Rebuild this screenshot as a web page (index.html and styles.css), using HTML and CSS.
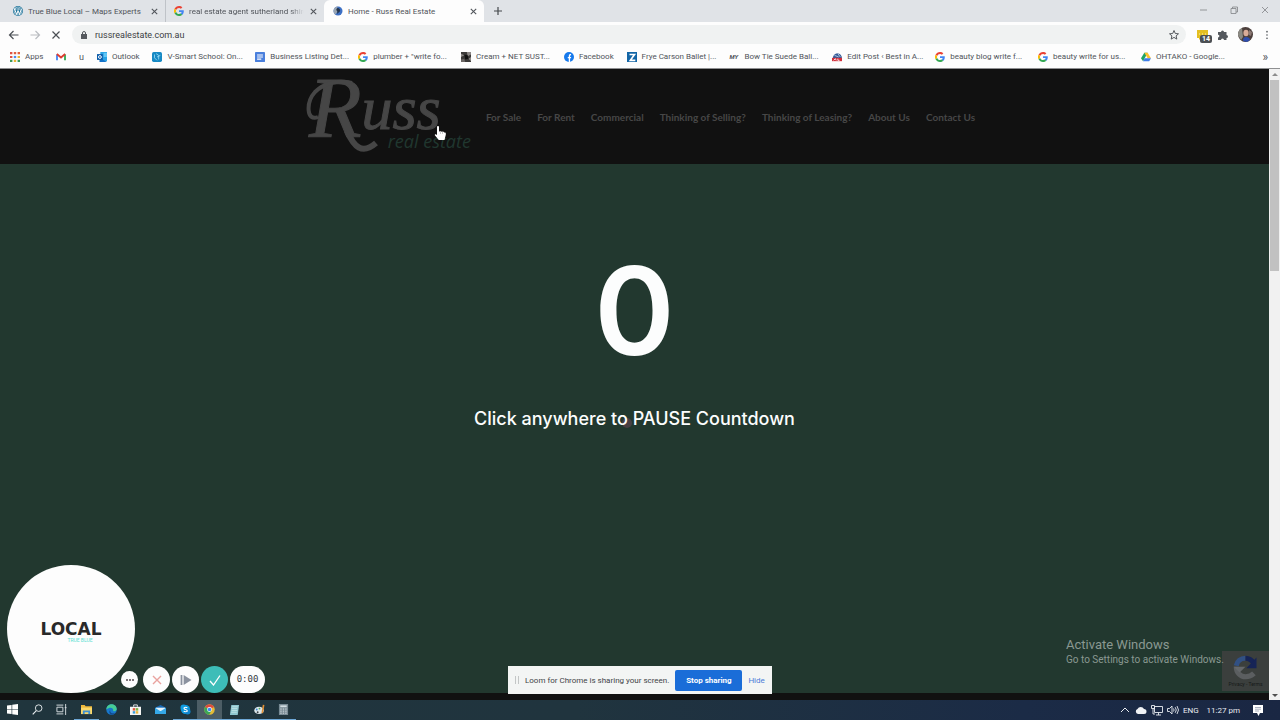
FILE: index.html
```html
<!DOCTYPE html>
<html lang="en">
<head>
  <meta charset="UTF-8">
  <meta name="viewport" content="width=device-width, initial-scale=1.0">
  <title>Home - Russ Real Estate</title>
  <link rel="stylesheet" href="styles.css">
</head>
<body>
  <!-- shared icons -->
  <svg class="defs" width="0" height="0" aria-hidden="true">
    <symbol id="google" viewBox="0 0 48 48">
      <path fill="#ea4335" d="M24 9.500c3.500 0 6.700 1.200 9.200 3.600l6.900-6.900C35.900 2.400 30.500 0 24 0 14.600 0 6.500 5.400 2.600 13.200l8 6.200C12.400 13.700 17.700 9.500 24 9.500z"/>
      <path fill="#4285f4" d="M47 24.600c0-1.600-.2-3.100-.4-4.600H24v9h12.900c-.6 3-2.200 5.500-4.700 7.200l7.700 6C44.400 38 47 31.800 47 24.600z"/>
      <path fill="#fbbc05" d="M10.500 28.600a14.500 14.500 0 0 1 0-9.200l-8-6.200a24 24 0 0 0 0 21.600z"/>
      <path fill="#34a853" d="M24 48c6.500 0 11.900-2.100 15.900-5.800l-7.700-6c-2.200 1.500-4.900 2.300-8.200 2.300-6.300 0-11.600-4.200-13.500-9.900l-8 6.200C6.500 42.600 14.600 48 24 48z"/>
    </symbol>
    <symbol id="close" viewBox="0 0 10 10">
      <path d="M2 2l6 6M8 2l-6 6" fill="none" stroke="currentColor" stroke-width="1.200"/>
    </symbol>
  </svg>

  <header class="browser">
    <div class="tabs">
      <div class="tab">
        <svg class="icon" viewBox="0 0 20 20"><circle cx="10" cy="10" r="10" fill="#21759b"/><circle cx="10" cy="10" r="8" fill="none" stroke="#fff" stroke-width="1"/><path d="M3 6l4.500 11L10 9l3 8 3.500-11M2 6h5M8.500 6h5" fill="none" stroke="#fff" stroke-width="2"/></svg>
        <a class="tab-title" href="#">True Blue Local – Maps Experts</a>
        <button class="tab-close" aria-label="Close tab"><svg><use href="#close"/></svg></button>
      </div>
      <div class="tab tab-second">
        <svg class="icon"><use href="#google"/></svg>
        <a class="tab-title fade" href="#">real estate agent sutherland shire</a>
        <button class="tab-close" aria-label="Close tab"><svg><use href="#close"/></svg></button>
      </div>
      <div class="tab active">
        <svg class="icon" viewBox="0 0 20 20"><circle cx="10" cy="10" r="9" fill="#3c6fc4"/><path d="M10 1a9 9 0 0 0-4 17c-1-4 3-5 3-8s-3-3 1-9z" fill="#9aa5b1"/><path d="M9 4c4 0 6 3 5 6s-4 3-5 6c-2-2 1-4-1-6s-2-4 1-6z" fill="#26364d"/></svg>
        <a class="tab-title" href="#">Home - Russ Real Estate</a>
        <button class="tab-close" aria-label="Close tab"><svg><use href="#close"/></svg></button>
      </div>
      <button class="new-tab" aria-label="New tab"><svg viewBox="0 0 10 10"><path d="M5 1v8M1 5h8" stroke="#45494d" stroke-width="1.200"/></svg></button>
      <div class="window-buttons">
        <button aria-label="Minimize"><svg viewBox="0 0 10 10"><path d="M2 5h7"/></svg></button>
        <button aria-label="Restore"><svg viewBox="0 0 10 10"><path d="M2 3.500h5v5H2zM3.500 3.500V2h5v5H7"/></svg></button>
        <button aria-label="Close"><svg viewBox="0 0 10 10"><path d="M2 2l6 6M8 2l-6 6"/></svg></button>
      </div>
    </div>

    <div class="toolbar">
      <div class="nav-buttons">
        <button aria-label="Back"><svg viewBox="0 0 12 12"><path d="M10.500 6h-9M5.500 2l-4 4 4 4" stroke="#4b4f54"/></svg></button>
        <button aria-label="Forward"><svg viewBox="0 0 12 12"><path d="M1.500 6h9M6.500 2l4 4-4 4" stroke="#b9bcc0"/></svg></button>
        <button aria-label="Stop loading"><svg viewBox="0 0 12 12"><path d="M2.500 2.500l7 7M9.500 2.500l-7 7" stroke="#4b4f54"/></svg></button>
      </div>
      <div class="omnibox">
        <svg class="lock" viewBox="0 0 8 10"><path d="M1 4h6v5H1z" fill="#55595e"/><path d="M2.500 4.500V3a1.500 1.500 0 0 1 3 0v1.500" fill="none" stroke="#55595e"/></svg>
        <input type="text" value="russrealestate.com.au" aria-label="Address">
        <button class="star" aria-label="Bookmark this page"><svg viewBox="0 0 12 12"><path d="M6 1.500l1.300 3 3.200.3-2.400 2.100.7 3.200L6 8.400l-2.800 1.700.7-3.200-2.400-2.100 3.200-.3z" fill="none" stroke="#55595e"/></svg></button>
      </div>
      <div class="extensions">
        <button class="ext-badge" aria-label="Extension">
          <svg viewBox="0 0 12 12"><path d="M1 1h11v8H5l-2 2V9H1z" fill="#e4bf22"/><path d="M3 5h1M6 5h1M9 5h1" stroke="#fff3b5"/></svg>
          <span>14</span>
        </button>
        <button aria-label="Extensions"><svg viewBox="0 0 12 12"><path d="M1 3h3a1.500 1.500 0 0 1 3 0h2.500v3a1.400 1.400 0 0 1 0 3v2H7a1.400 1.400 0 0 0-3 0H1V8.500a1.400 1.400 0 0 0 0-2.800z" fill="#55595e"/></svg></button>
        <button class="avatar" aria-label="Profile"><svg viewBox="0 0 15 15"><circle cx="7.500" cy="7.500" r="7.500" fill="#4b3e3b"/><path d="M0 8a7.500 7.500 0 0 1 4-7l1 9-2 3z" fill="#8b8a83"/><ellipse cx="8" cy="6" rx="2.600" ry="3.300" fill="#d9ac98"/><path d="M5 14c0-3 1-4 3-4s4 1 4 3l-3 2z" fill="#2d4dae"/><path d="M11 3l3 2-1 4-2-1z" fill="#8d7a75"/></svg></button>
        <button aria-label="Menu"><svg viewBox="0 0 12 12"><g fill="#55595e"><circle cx="6" cy="2" r="1"/><circle cx="6" cy="6" r="1"/><circle cx="6" cy="10" r="1"/></g></svg></button>
      </div>
    </div>

    <nav class="bookmarks">
      <ul>
        <li><a href="#"><svg class="icon" viewBox="0 0 10 10"><path d="M0 1.200h2.400M0 5h2.400" stroke="#dd5144" stroke-width="2.200"/><path d="M3.800 1.200h2.400M7.600 1.200H10" stroke="#e0603f" stroke-width="2.200"/><path d="M3.800 5h2.400" stroke="#4b8bf0" stroke-width="2.200"/><path d="M7.600 5H10M3.800 8.800h2.400" stroke="#e8b532" stroke-width="2.200"/><path d="M0 8.800h2.400M7.600 8.800H10" stroke="#3c9a5b" stroke-width="2.200"/></svg><span>Apps</span></a></li>
        <li><a href="#" aria-label="Gmail"><svg class="icon" viewBox="0 0 12 10"><path d="M1.200 9V2" stroke="#4285f4" stroke-width="2.200"/><path d="M10.800 9V2" stroke="#34a853" stroke-width="2.200"/><path d="M1 1.500l5 4 5-4" fill="none" stroke="#dd3c30" stroke-width="2.300"/></svg></a></li>
        <li><a href="#" class="letter">u</a></li>
        <li><a href="#"><svg class="icon" viewBox="0 0 12 12"><path d="M4 0h8v11H4z" fill="#2aa4e6"/><path d="M8 1h4v5H8z" fill="#62c6f5"/><path d="M3 7l9 5H3z" fill="#1372c8"/><path d="M0 2.500h7v7H0z" fill="#0b5cab"/><circle cx="3.500" cy="6" r="1.700" fill="none" stroke="#fff" stroke-width="1.200"/></svg><span>Outlook</span></a></li>
        <li><a href="#"><svg class="icon" viewBox="0 0 12 12"><rect width="12" height="12" rx="2" fill="#1689c4"/><path d="M3 3v4l3 3M6 6l4-2M5 2l3 2v5" fill="none" stroke="#9bdcf5"/></svg><span class="long">V-Smart School: On...</span></a></li>
        <li><a href="#"><svg class="icon" viewBox="0 0 12 12"><rect width="12" height="12" rx="1" fill="#4a7fdc"/><path d="M2.500 3.500h7M2.500 6h7M2.500 8.500h5" stroke="#fff" stroke-width="1.300"/></svg><span class="long">Business Listing Det...</span></a></li>
        <li><a href="#"><svg class="icon"><use href="#google"/></svg><span class="long">plumber + "write fo...</span></a></li>
        <li><a href="#"><svg class="icon" viewBox="0 0 12 12"><path d="M0 0h12v12H0z" fill="#3b3938"/><path d="M0 2l4 2-4 2zM7 0h5v3L8 5zM12 6v5L9 8z" fill="#8d8886"/><path d="M0 9l4-1 1 4H0z" fill="#6a6664"/><path d="M4 3l4 1 1 4-4 1z" fill="#111"/></svg><span class="long">Cream + NET SUST...</span></a></li>
        <li><a href="#"><svg class="icon" viewBox="0 0 12 12"><circle cx="6" cy="6" r="6" fill="#1679ec"/><path d="M6.500 12V4.500q0-1.500 2-1.500M4.500 6.800h4" fill="none" stroke="#fff" stroke-width="1.600"/></svg><span>Facebook</span></a></li>
        <li><a href="#"><svg class="icon" viewBox="0 0 12 12"><path d="M0 0h12v12H0z" fill="#1265a6"/><path d="M3 3h6L4 10h6" fill="none" stroke="#fff" stroke-width="2"/></svg><span class="long">Frye Carson Ballet |...</span></a></li>
        <li><a href="#"><b class="my">MY</b><span class="long">Bow Tie Suede Ball...</span></a></li>
        <li><a href="#"><svg class="icon" viewBox="0 0 12 12"><path d="M1 8a5.500 6.500 0 0 1 11 0z" fill="#355c99"/><path d="M3 4l5 2M7 2l3 4" stroke="#c5d5e8"/><path d="M0 7h12v4H0z" fill="#d12f3b"/><path d="M2 10l2-2 1 2M7 8v2h2" fill="none" stroke="#fff"/></svg><span class="long">Edit Post ‹ Best in A...</span></a></li>
        <li><a href="#"><svg class="icon"><use href="#google"/></svg><span class="long">beauty blog write f...</span></a></li>
        <li><a href="#"><svg class="icon"><use href="#google"/></svg><span class="long">beauty write for us...</span></a></li>
        <li><a href="#"><svg class="icon" viewBox="0 0 12 12"><path d="M4 1h4l-5.500 10L0 7.500z" fill="#20a464"/><path d="M4 1h4l4 6.500H8z" fill="#fbc02d"/><path d="M2.500 11L4.500 7.500H12L9.800 11z" fill="#3f7de8"/></svg><span class="long">OHTAKO - Google...</span></a></li>
      </ul>
      <button class="more" aria-label="More bookmarks">»</button>
    </nav>
  </header>

  <div class="viewport">
    <div class="page">
      <header class="site-header">
        <a class="logo" href="#">
          <span class="logo-name"><span class="logo-cap">R</span><span>uss</span></span>
          <span class="logo-sub">real estate</span>
          <svg class="logo-flourish" viewBox="0 0 170 80" aria-hidden="true"><path d="M12 38C0 43 0 23 9 13 18 4 32 1 46 4" fill="none" stroke="#464646" stroke-width="4"/><path d="M41 52C48 68 56 76 70 64" fill="none" stroke="#464646" stroke-width="6"/></svg>
        </a>
        <nav class="site-nav">
          <a href="#">For Sale</a>
          <a href="#">For Rent</a>
          <a href="#">Commercial</a>
          <a href="#">Thinking of Selling?</a>
          <a href="#">Thinking of Leasing?</a>
          <a href="#">About Us</a>
          <a href="#">Contact Us</a>
        </nav>
      </header>
      <main class="countdown">
        <div class="count">0</div>
        <p><i class="dot"></i>Click anywhere to PAUSE Countdown</p>
      </main>
      <div class="page-bottom"></div>
    </div>
    <div class="scrollbar">
      <span class="arrow up"></span>
      <span class="thumb"></span>
      <span class="arrow down"></span>
    </div>

    <svg class="cursor" viewBox="0 0 12 16"><path d="M3 2c0-1.500 2-1.500 2 0v4.500l1.500-.3 1.300.6 1.400-.2 1 .8 1 .2c.6.400.8 1 .6 2.200L10.500 15H4.800L1 10.500C.3 9.300 1.500 8.500 3 10z" fill="#fff"/><path d="M6.500 7v2M8.500 7v2" stroke="#999" stroke-width=".5"/></svg>

    <div class="camera"><strong>LOCAL</strong><small>TRUE BLUE</small></div>
    <div class="recorder">
      <button class="small" aria-label="More options"><svg viewBox="0 0 12 12"><path d="M2 6h2M5 6h2M8 6h2" stroke="#54484d" stroke-width="1.300"/></svg></button>
      <button aria-label="Cancel"><svg viewBox="0 0 12 12"><path d="M2 2l8 8M10 2l-8 8" stroke="#e9a29e" stroke-width="1.400"/></svg></button>
      <button aria-label="Resume"><svg viewBox="0 0 12 12"><path d="M1.500 1v10" stroke="#8b929f" stroke-width="1.800"/><path d="M3.600 1L11.500 6 3.600 11z" fill="#8b929f"/></svg></button>
      <button class="done" aria-label="Finish"><svg viewBox="0 0 12 12"><path d="M1 7l3.500 4L11 1.500" fill="none" stroke="#fff" stroke-width="1.300"/></svg></button>
      <span class="time">0:00</span>
    </div>

    <div class="sharing">
      <span class="grip"></span>
      <span>Loom for Chrome is sharing your screen.</span>
      <button>Stop sharing</button>
      <a href="#">Hide</a>
    </div>

    <div class="recaptcha">
      <svg viewBox="0 0 32 32"><path d="M5 14A11 11 0 0 1 16 5" fill="none" stroke="#315083" stroke-width="6"/><path d="M16 5c5 0 8 3 10 6" fill="none" stroke="#162456" stroke-width="6"/><path d="M29 4v13H17z" fill="#162456"/><path d="M5 15c0 7 5 12 11 12 4 0 7-1 10-4" fill="none" stroke="#5b5e60" stroke-width="6"/><path d="M2 15h14l-7 7z" fill="#64676a"/></svg>
      <small>Privacy - Terms</small>
    </div>
    <div class="watermark">
      <span class="big">Activate Windows</span>
      <span>Go to Settings to activate Windows.</span>
    </div>
  </div>

  <footer class="taskbar">
    <div class="apps">
      <button aria-label="Start"><svg viewBox="0 0 12 12"><path d="M0 1.700L5 1v4.600H0zM5.700.9L12 0v5.600H5.700zM0 6.300h5V11l-5-.7zM5.700 6.300H12V12l-6.300-.9z" fill="#fff"/></svg></button>
      <button aria-label="Search"><svg viewBox="0 0 12 12"><circle cx="7.300" cy="4.500" r="3.600" fill="none" stroke="#e8edef"/><path d="M4.700 7.200L.8 11.400" stroke="#e8edef" stroke-width="1.200"/></svg></button>
      <button aria-label="Task view"><svg viewBox="0 0 12 12"><path d="M1 3.500h6.500v5H1zM.5 1.200H8M.5 10.800H8M10.500 0v12M9.500 4h2" fill="none" stroke="#dce3e6"/></svg></button>
      <button class="open" aria-label="File Explorer"><svg viewBox="0 0 12 12"><path d="M0 1h4l1 1.500h7V11H0z" fill="#efb93c"/><path d="M0 4h12v7H0z" fill="#fbd869"/><path d="M2 11V7h8v4H8V9H4v2z" fill="#3e91d4"/></svg></button>
      <button aria-label="Edge"><svg viewBox="0 0 12 12"><circle cx="6" cy="6" r="5.700" fill="#1878cc"/><path d="M.4 6C.5-1.500 11.500-1.500 11.700 5.500c0 2-2.200 3-4 2 1-3-3-5-7.300-1.500z" fill="#46cc96"/><path d="M4.500 6.500C4 10 8 11 10.500 9.500 7 14 1.500 10 4.500 6.500z" fill="#124c91"/></svg></button>
      <button aria-label="Store"><svg viewBox="0 0 12 12"><path d="M4 3V1h4v2" fill="none" stroke="#eee"/><path d="M0 3h12v9H0z" fill="#f5f5f4"/><path d="M3 4.500h2.700v2.700H3z" fill="#e3553d"/><path d="M6.300 4.500H9v2.700H6.300z" fill="#7eb443"/><path d="M3 7.800h2.700v2.700H3z" fill="#3b9ddd"/><path d="M6.300 7.800H9v2.700H6.300z" fill="#eab63c"/></svg></button>
      <button aria-label="Mail"><svg viewBox="0 0 12 12"><path d="M0 4l6-3 6 3v7H0z" fill="#1569b5"/><path d="M1 4h10v4H1z" fill="#e4f3fa"/><path d="M0 4l6 4 6-4v7H0z" fill="#35a8e8"/></svg></button>
      <button class="open" aria-label="Skype"><svg viewBox="0 0 12 12"><circle cx="6" cy="6" r="5" fill="#0f9de2"/><circle cx="4" cy="4" r="3.500" fill="#0f9de2"/><circle cx="8.300" cy="8.300" r="3.200" fill="#0f86d0"/><path d="M8 4Q6 3 4.500 4.200 4 5.500 6 6t2 1.700Q6.500 9 4 8" fill="none" stroke="#fff" stroke-width="1.200"/></svg></button>
      <button class="open current" aria-label="Chrome"><svg viewBox="0 0 12 12"><circle cx="6" cy="6" r="5.700" fill="#e5ba34"/><path d="M6 6L1 3.200A5.700 5.700 0 0 1 11 3.200z" fill="#dc4b3e"/><path d="M1 3.200A5.700 5.700 0 0 0 5.500 11.700L8 7.500 6 6z" fill="#3aa757"/><circle cx="6" cy="6" r="2.600" fill="#fff"/><circle cx="6" cy="6" r="2" fill="#4285f4"/></svg></button>
      <button class="open" aria-label="Notepad"><svg viewBox="0 0 12 12"><path d="M2.500 1H11L9.500 12H1z" fill="#8fc6cf"/><path d="M3.500 3h6M3 5h6M3 7h6M2.500 9h6" stroke="#d6eff0" stroke-width=".7"/></svg></button>
      <button class="open" aria-label="Paint"><svg viewBox="0 0 12 12"><ellipse cx="5.500" cy="7" rx="5.200" ry="4" fill="#dce6ea"/><circle cx="3" cy="6" r="1" fill="#3c8ad1"/><circle cx="6" cy="5" r="1" fill="#52a95b"/><circle cx="4" cy="9" r="1" fill="#343a40"/><path d="M10.500 1L9 10" stroke="#e08f36" stroke-width="1.800"/></svg></button>
      <button class="open" aria-label="Calculator"><svg viewBox="0 0 12 12"><path d="M1 0h10v12H1z" fill="#788a94"/><path d="M2.500 1.500h7v2h-7z" fill="#d2dde2"/><path d="M2.500 5.500h7M2.500 7.800h7M2.500 10h7" stroke="#e1e8eb" stroke-dasharray="1.500 1.200"/></svg></button>
    </div>
    <div class="tray">
      <svg viewBox="0 0 12 12"><path d="M2 8l4-4 4 4" fill="none" stroke="#e9ecf1"/></svg>
      <svg viewBox="0 0 12 12"><path d="M3 10a2.600 2.600 0 0 1-.5-5A3.600 3.600 0 0 1 9 5a2.500 2.500 0 0 1 0 5z" fill="#f0f2f5"/></svg>
      <svg viewBox="0 0 12 12"><path d="M3.500 2.500h8v6h-8zM5 11h5M7.500 8.500V11M.5 1.500h3v3h-3zM2 4.500V10h2" fill="none" stroke="#e9ecf1" stroke-width=".9"/></svg>
      <svg viewBox="0 0 12 12"><path d="M.5 4.500h2L5 2v8L2.500 7.500h-2zM6.500 4.500q1.200 1.500 0 3M8.200 3.200q2.200 2.800 0 5.600M10 2q3 4 0 8" fill="none" stroke="#e9ecf1" stroke-width=".9"/></svg>
      <span>ENG</span>
      <time>11:27 pm</time>
      <svg viewBox="0 0 12 12"><path d="M1 1h10v8H8l-1.500 3L5 9H1z" fill="#fff"/><path d="M3 3.500h6M3 5.200h6M3 7h4" stroke="#8791a5" stroke-width=".7"/></svg>
    </div>
  </footer>
</body>
</html>
```
FILE: styles.css
```css
* {
  box-sizing: border-box;
}

body {
  margin: 0;
  height: 100vh;
  display: flex;
  flex-direction: column;
  overflow: hidden;
  font-family: Roboto, sans-serif;
  font-size: 8px;
  color: #50545a;
}

a {
  color: inherit;
  text-decoration: none;
}

button {
  border: none;
  padding: 0;
  background: none;
  font: inherit;
  color: inherit;
  display: flex;
  align-items: center;
  justify-content: center;
}

svg {
  display: block;
  flex: none;
}

.defs {
  position: absolute;
}

.icon {
  width: 10px;
  height: 10px;
}

/* browser window */
.browser {
  background: #fdfdfd;
  border-bottom: 1px solid #8f9092;
}

.tabs {
  display: flex;
  height: 22px;
  background: #e0e3e7;
}

.tab {
  display: flex;
  align-items: center;
  gap: 5px;
  width: 165px;
  padding: 0 6px 0 13px;
}

.tab-second {
  width: 159px;
  padding-left: 8px;
  border-left: 1px solid #bfc3c8;
}

.tab.active {
  width: 160px;
  padding-left: 9px;
  background: #fdfdfd;
  border-radius: 6px 6px 0 0;
}

.tab-title {
  flex: 1;
  overflow: hidden;
  white-space: nowrap;
}

.fade {
  mask-image: linear-gradient(to right, #000 88%, transparent);
}

.tab-close svg {
  width: 9px;
  height: 9px;
}

.new-tab {
  width: 28px;
}

.new-tab svg,
.window-buttons svg {
  width: 10px;
  height: 10px;
}

.window-buttons {
  display: flex;
  margin-left: auto;
}

.window-buttons button {
  width: 31px;
  padding-bottom: 3px;
}

.window-buttons path {
  fill: none;
  stroke: #808387;
  stroke-width: 0.8;
}

.toolbar {
  display: flex;
  align-items: center;
  height: 23px;
  padding: 2px 8px 0;
}

.nav-buttons {
  display: flex;
  gap: 9px;
  width: 64px;
}

.nav-buttons svg,
.star svg,
.extensions svg {
  width: 12px;
  height: 12px;
}

.nav-buttons path {
  fill: none;
  stroke-width: 1.2;
}

.omnibox {
  flex: 1;
  display: flex;
  align-items: center;
  gap: 7px;
  height: 19px;
  padding: 0 6px 0 8px;
  background: #f0f2f2;
  border-radius: 10px;
}

.lock {
  width: 8px;
  height: 10px;
}

.omnibox input {
  flex: 1;
  border: none;
  padding: 0;
  background: none;
  font: inherit;
  font-size: 9px;
  color: #3c4043;
  outline: none;
}

.extensions {
  display: flex;
  align-items: center;
  gap: 9px;
  padding-left: 10px;
}

.extensions button:last-child svg {
  width: 10px;
}

.ext-badge {
  position: relative;
}

.ext-badge span {
  position: absolute;
  left: 4px;
  top: 6px;
  padding: 0 2px;
  background: #4c5054;
  border-radius: 2px;
  color: #fff;
  font-size: 7px;
  line-height: 8px;
  font-weight: 700;
}

.extensions .avatar svg {
  width: 15px;
  height: 15px;
}

.bookmarks {
  display: flex;
  align-items: center;
  height: 23px;
  padding: 0 12px 0 10px;
}

.bookmarks ul {
  flex: 1;
  display: flex;
  align-items: center;
  justify-content: space-between;
  list-style: none;
  margin: 0;
  padding: 0;
}

.bookmarks a {
  display: flex;
  align-items: center;
  gap: 5px;
  white-space: nowrap;
}

.long {
  width: 75px;
}

.bookmarks .letter {
  line-height: 10px;
  font-size: 9px;
}

.my {
  width: 10px;
  font-size: 6px;
  font-style: italic;
}

.more {
  width: 37px;
  justify-content: flex-end;
  font-size: 12px;
  line-height: 12px;
}

/* website */
.viewport {
  position: relative;
  flex: 1;
  min-height: 0;
  display: flex;
}

.page {
  flex: 1;
  display: flex;
  flex-direction: column;
  background: #22382f;
}

.site-header {
  display: flex;
  align-items: center;
  justify-content: center;
  gap: 15px;
  height: 95px;
  padding-left: 12px;
  background: #111;
}

.logo {
  position: relative;
  width: 165px;
  height: 76px;
  color: #464646;
}

.logo-name {
  display: flex;
  padding-left: 3px;
  font-family: "Liberation Serif", serif;
  font-style: italic;
  font-size: 62px;
  line-height: 58px;
  -webkit-text-stroke: 1px #464646;
}

.logo-cap {
  font-size: 86px;
}

.logo-sub {
  position: absolute;
  right: 0;
  bottom: 4px;
  font-family: "Open Sans", sans-serif;
  font-size: 18px;
  line-height: 20px;
  font-style: italic;
  color: #20372f;
}

.logo-flourish {
  position: absolute;
  left: 0;
  top: 0;
  width: 170px;
  height: 80px;
}

.site-nav {
  display: flex;
  gap: 16px;
  font-family: Lato, sans-serif;
  font-size: 10px;
  font-weight: 700;
  color: #474747;
}

.countdown {
  flex: 1;
  display: flex;
  flex-direction: column;
  align-items: center;
  padding-top: 85px;
  font-family: Inter, sans-serif;
  font-weight: 500;
  color: #fcfdfd;
}

.count {
  font-size: 122px;
  line-height: 124px;
  font-weight: 600;
}

.countdown p {
  position: relative;
  z-index: 0;
  margin: 34px 0 0;
  font-size: 18px;
  line-height: 24px;
}

.dot {
  position: absolute;
  left: 148px;
  top: 11px;
  width: 10px;
  height: 10px;
  border-radius: 50%;
  background: #493f43;
  z-index: -1;
}

.page-bottom {
  height: 7px;
  background: #111;
}

.scrollbar {
  display: flex;
  flex-direction: column;
  align-items: center;
  width: 11px;
  background: #f1f1f1;
}

.thumb {
  width: 9px;
  height: 191px;
  background: #c1c1c1;
}

.arrow {
  width: 0;
  height: 0;
  margin: 4px 0;
  border: 3px solid transparent;
}

.up {
  margin-top: 1px;
  border-bottom-color: #8b8b8b;
}

.down {
  margin: auto 0 0;
  border-top-color: #505050;
}

/* things floating over the page */
.cursor {
  position: absolute;
  left: 434px;
  top: 56px;
  width: 12px;
  height: 16px;
}

.camera {
  position: absolute;
  left: 7px;
  bottom: 7px;
  width: 128px;
  height: 128px;
  display: flex;
  flex-direction: column;
  align-items: center;
  justify-content: center;
  padding-top: 6px;
  border-radius: 50%;
  background: #fdfdfd;
}

.camera strong {
  font-family: "DejaVu Sans", sans-serif;
  font-size: 17px;
  line-height: 16px;
  color: #292929;
}

.camera small {
  padding-left: 18px;
  font-size: 5px;
  line-height: 6px;
  color: #58e0d2;
}

.recorder {
  position: absolute;
  left: 121px;
  bottom: 7px;
  display: flex;
  align-items: center;
  gap: 2px;
}

.recorder button,
.time {
  width: 27px;
  height: 27px;
  border-radius: 14px;
  background: #fdfdfd;
}

.recorder svg {
  width: 12px;
  height: 12px;
}

.recorder .small {
  width: 17px;
  height: 17px;
  margin-right: 3px;
}

.recorder .done {
  background: #3dbdb8;
}

.recorder .time {
  width: 35px;
  font-family: "DejaVu Sans Mono", monospace;
  font-size: 9px;
  line-height: 27px;
  text-align: center;
  color: #33383d;
}

.sharing {
  position: absolute;
  left: 508px;
  bottom: 6px;
  height: 28px;
  display: flex;
  align-items: center;
  gap: 6px;
  padding: 0 7px;
  background: #f3f5f4;
  color: #3f4447;
  white-space: nowrap;
}

.grip {
  width: 4px;
  height: 8px;
  border: solid #c3c6c6;
  border-width: 0 1px;
}

.sharing button {
  width: 67px;
  height: 21px;
  border-radius: 2px;
  background: #1a6dd8;
  color: #fff;
  font-weight: 700;
}

.sharing a {
  color: #4a7bd8;
}

.watermark {
  position: absolute;
  left: 1066px;
  bottom: 33px;
  display: flex;
  flex-direction: column;
  font-size: 10px;
  line-height: 14px;
  color: #8a9892;
  white-space: nowrap;
}

.watermark .big {
  font-size: 13px;
  line-height: 17px;
}

.recaptcha {
  position: absolute;
  right: 11px;
  bottom: 9px;
  width: 47px;
  height: 40px;
  display: flex;
  flex-direction: column;
  align-items: center;
  padding-top: 3px;
  background: #3b3f3d;
}

.recaptcha svg {
  width: 27px;
  height: 27px;
}

.recaptcha small {
  font-size: 5px;
  line-height: 7px;
  color: #161918;
}

/* taskbar */
.taskbar {
  display: flex;
  justify-content: space-between;
  height: 20px;
  background: linear-gradient(to right, #20353d, #20343e 45%, #1b2b46 80%, #1a2743);
  color: #e9ecf1;
}

.apps {
  display: flex;
  width: 296px;
}

.apps button {
  flex: 1;
  border-bottom: 1px solid transparent;
}

.apps svg {
  width: 11px;
  height: 11px;
}

.apps .open {
  border-color: #6fa9d8;
}

.apps .current {
  background: #4c5d65;
}

.tray {
  display: flex;
  align-items: center;
  gap: 4px;
  padding-right: 16px;
}

.tray svg {
  width: 12px;
  height: 12px;
}

.tray time {
  margin: 0 8px 0 4px;
}
```
